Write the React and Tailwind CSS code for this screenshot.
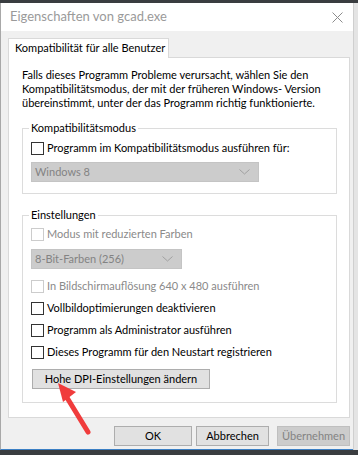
import React from "react";

const font = { fontFamily: 'Lato, "Noto Sans", sans-serif' };

function Check({ label, disabled = false }) {
    return (
        <div className="flex items-center h-[20px]">
            <span
                className={`w-[13px] h-[13px] border bg-white shrink-0 ${disabled ? "border-[#cccccc]" : "border-[#333333]"}`}
            />
            <span
                className={`ml-[3px] text-[11px] leading-[14px] whitespace-nowrap ${disabled ? "text-[#8a8a8a]" : "text-black"}`}
            >
                {label}
            </span>
        </div>
    );
}

function Select({ value, width }) {
    return (
        <div
            className={`${width} h-[20px] bg-[#cccccc] border border-[#c4c4c4] flex items-center justify-between pl-[3px] pr-[8px]`}
        >
            <span className="text-[11px] leading-[14px] text-[#838383] whitespace-nowrap">
                {value}
            </span>
            <svg width="11" height="6" viewBox="0 0 11 6">
                <path d="M0.5 0.5 L5.5 5 L10.5 0.5" fill="none" stroke="#a0a0a0" strokeWidth="1" />
            </svg>
        </div>
    );
}

function Group({ title, className, children }) {
    return (
        <div className={`relative border border-[#dcdcdc] ${className}`}>
            <span className="absolute -top-[9px] left-[6px] bg-white px-[2px] text-[11px] leading-[16px] text-black whitespace-nowrap">
                {title}
            </span>
            {children}
        </div>
    );
}

function Button({ children, width, disabled = false }) {
    return (
        <div
            className={`${width} h-[20px] flex items-center justify-center border text-[11px] leading-[14px] whitespace-nowrap ${
                disabled
                    ? "bg-[#cccccc] border-[#bfbfbf] text-[#838383]"
                    : "bg-[#e1e1e1] border-[#adadad] text-black"
            }`}
        >
            {children}
        </div>
    );
}

export default function App() {
    return (
        <div
            className="relative w-[358px] h-[455px] overflow-hidden bg-[#3a3d40] flex flex-col pt-[3px]"
            style={font}
        >
            <div className="flex h-[447px]">
                {/* window */}
                <div className="w-[353px] flex flex-col border-l border-[#a8a8a8] border-b border-b-[#3b7fc4]">
                    {/* title bar */}
                    <div className="h-[28px] bg-white flex items-center justify-between pl-[9px] pr-[10px]">
                        <span className="text-[13px] text-[#9a9a9a] whitespace-nowrap">
                            Eigenschaften von gcad.exe
                        </span>
                        <svg width="11" height="11" viewBox="0 0 11 11">
                            <path d="M0.5 0.5 L10.5 10.5 M10.5 0.5 L0.5 10.5" stroke="#8c8c8c" strokeWidth="1" />
                        </svg>
                    </div>

                    {/* body */}
                    <div className="flex-1 bg-[#f0f0f0] pl-[7px] pt-[7px]">
                        <div className="relative z-10 w-[161px] h-[20px] bg-white border border-[#d9d9d9] border-b-0 flex items-center pl-[6px] text-[11px] text-black whitespace-nowrap">
                            Kompatibilität für alle Benutzer
                        </div>
                        <div className="-mt-px w-[342px] h-[361px] bg-white border border-[#d9d9d9] pl-[13px] pt-[10px]">
                            <p className="text-[11px] leading-[14px] text-black whitespace-nowrap">
                                Falls dieses Programm Probleme verursacht, wählen Sie den
                                <br />
                                Kompatibilitätsmodus, der mit der früheren Windows- Version
                                <br />
                                übereinstimmt, unter der das Programm richtig funktionierte.
                            </p>

                            <Group title="Kompatibilitätsmodus" className="mt-[18px] w-[315px] h-[66px] pl-[8px] pt-[9px]">
                                <Check label="Programm im Kompatibilitätsmodus ausführen für:" />
                                <div className="mt-[4px]">
                                    <Select value="Windows 8" width="w-[228px]" />
                                </div>
                            </Group>

                            <Group title="Einstellungen" className="mt-[21px] w-[315px] h-[188px] pl-[8px] pt-[8px]">
                                <Check label="Modus mit reduzierten Farben" disabled />
                                <div className="mt-[5px]">
                                    <Select value="8-Bit-Farben (256)" width="w-[151px]" />
                                </div>
                                <div className="mt-[7px] flex flex-col gap-[2px]">
                                    <Check label="In Bildschirmauflösung 640 x 480 ausführen" disabled />
                                    <Check label="Vollbildoptimierungen deaktivieren" />
                                    <Check label="Programm als Administrator ausführen" />
                                    <Check label="Dieses Programm für den Neustart registrieren" />
                                </div>
                                <div className="mt-[7px] ml-[1px]">
                                    <Button width="w-[178px]">Hohe DPI-Einstellungen ändern</Button>
                                </div>
                            </Group>
                        </div>

                        <div className="w-[342px] flex justify-end gap-[4px] mt-[8px]">
                            <Button width="w-[78px]">OK</Button>
                            <Button width="w-[73px]">Abbrechen</Button>
                            <div className="ml-[4px]">
                                <Button width="w-[73px]" disabled>
                                    Übernehmen
                                </Button>
                            </div>
                        </div>
                    </div>
                </div>
                {/* desktop strip at right */}
                <div className="flex-1 bg-[#e4e4e4] border-l border-[#cfcfcf]" />
            </div>

            {/* red annotation arrow */}
            <svg
                className="absolute left-0 top-0 pointer-events-none"
                width="358"
                height="455"
                viewBox="0 0 358 455"
            >
                <line x1="66" y1="396" x2="88" y2="432" stroke="#f03c3c" strokeWidth="5" strokeLinecap="round" />
                <polygon points="58,383 76,392 63,402" fill="#f03c3c" />
            </svg>
        </div>
    );
}
